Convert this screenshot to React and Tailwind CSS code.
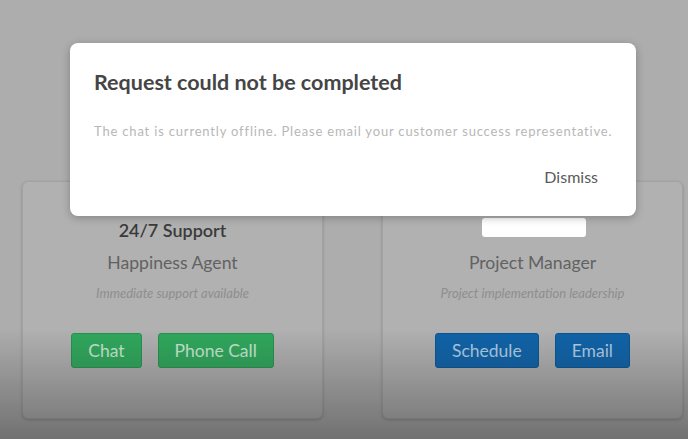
import React from "react";

const cards = [
  {
    title: "24/7 Support",
    role: "Happiness Agent",
    note: "Immediate support available",
    color: "green",
    actions: ["Chat", "Phone Call"],
  },
  {
    title: null,
    role: "Project Manager",
    note: "Project implementation leadership",
    color: "blue",
    actions: ["Schedule", "Email"],
  },
];

function Card({ card }) {
  const btn =
    card.color === "green"
      ? "bg-[#2fa85c] text-[#c6e8d0] border-[#27924f]"
      : "bg-[#0f63a9] text-[#b0cde6] border-[#0b5594]";
  return (
    <div className="w-[301px] h-[238px] shrink-0 rounded-[6px] border border-[#a2a2a2] bg-[#b1b1b1] shadow-[0_1px_3px_rgba(0,0,0,0.2)] flex flex-col items-center pt-[36px]">
      {card.title ? (
        <div className="h-[24px] text-[18px] font-semibold text-[#3b3b3b] leading-[24px]">
          {card.title}
        </div>
      ) : (
        <div className="h-[24px] flex items-start">
          <div className="h-[19px] w-[104px] ml-[3px] bg-white rounded-[3px]" />
        </div>
      )}
      <div className="mt-[9px] text-[17.6px] text-[#626262] leading-[24px]">{card.role}</div>
      <div className="mt-[10px] text-[13px] italic text-[#8e8e8e] leading-[16px]">{card.note}</div>
      <div className="mt-[32px] flex gap-[16px]">
        {card.actions.map((a) => (
          <button
            key={a}
            className={`h-[35px] px-[16px] rounded-[3px] border text-[17.5px] leading-none ${btn}`}
          >
            {a}
          </button>
        ))}
      </div>
    </div>
  );
}

export default function App() {
  return (
    <div
      className="relative w-full h-[439px] overflow-hidden bg-[#adadad]"
      style={{ fontFamily: "Lato, 'Open Sans', sans-serif" }}
    >
      <div className="flex gap-[59px] pl-[22px] pt-[181px]">
        {cards.map((c, i) => (
          <Card key={i} card={c} />
        ))}
      </div>

      {/* video-ish darkening at the bottom */}
      <div className="absolute left-0 right-0 bottom-0 h-[110px] bg-gradient-to-b from-transparent to-[rgba(40,40,40,0.45)] pointer-events-none" />

      {/* modal */}
      <div className="absolute left-[70px] top-[43px] w-[566px] h-[173px] bg-white rounded-[8px] shadow-[0_2px_8px_rgba(0,0,0,0.25)] px-[24px] pt-[25px]">
        <h2 className="text-[21.5px] font-bold text-[#454545] leading-[28px]">
          Request could not be completed
        </h2>
        <p className="mt-[26px] text-[13px] tracking-[0.82px] whitespace-nowrap text-[#b7b7b7] leading-[18px]">
          The chat is currently offline. Please email your customer success representative.
        </p>
        <div className="mt-[27px] flex justify-end pr-[14px]">
          <button className="text-[16px] text-[#5a5a5a] leading-[20px]">Dismiss</button>
        </div>
      </div>
    </div>
  );
}
